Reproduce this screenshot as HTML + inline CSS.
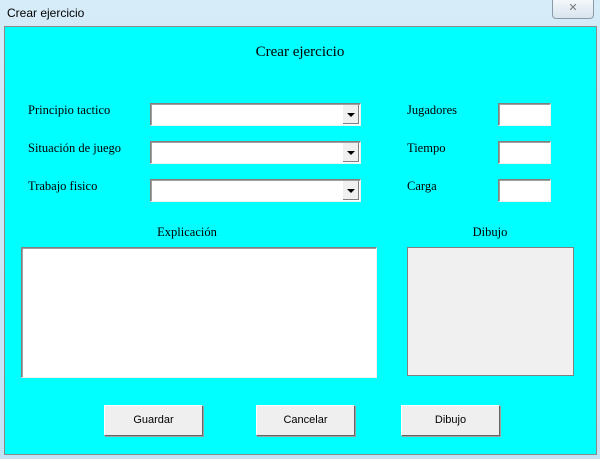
<!DOCTYPE html>
<html><head><meta charset="utf-8"><style>
*{margin:0;padding:0;box-sizing:border-box}
body{width:600px;height:459px;overflow:hidden;background:linear-gradient(#d6ecf8,#c4e4f5);position:relative;font-family:"Liberation Serif",serif}
.a{position:absolute}
.title{left:7px;top:6px;font:12px "Liberation Sans",sans-serif;color:#000}
.close{left:552px;top:0;width:42px;height:19px;border:1px solid #8a9aa8;border-top:none;border-radius:0 0 4px 4px;background:linear-gradient(#f4f8fb,#d8e4ee);text-align:center;font:11px "Liberation Sans",sans-serif;color:#777;line-height:17px}
.main{left:4px;top:26px;width:593px;height:429px;background:#00ffff;border:1px solid #8a8a8a}
.lbl{font-size:12.5px;color:#000}
.combo{width:211px;height:23px;background:#fff;border:1px solid;border-color:#808080 #f0f0f0 #f0f0f0 #808080;box-shadow:inset 1px 1px 0 #a0a0a0}
.combo i{position:absolute;right:1px;top:1px;width:16px;height:19px;background:#f0f0f0;border-right:1px solid #808080;border-bottom:1px solid #808080}
.combo i:after{content:"";position:absolute;left:4px;top:8px;border-left:4px solid transparent;border-right:4px solid transparent;border-top:4px solid #000}
.tb{width:53px;height:23px;background:#fff;border:1px solid;border-color:#808080 #f0f0f0 #f0f0f0 #808080;box-shadow:inset 1px 1px 0 #a0a0a0}
.btn{width:99px;height:31px;background:#efefef;border:1px solid;border-color:#fff #646464 #646464 #fff;box-shadow:1px 1px 0 #a0a0a0;font:11px "Liberation Sans",sans-serif;text-align:center;line-height:29px}
</style></head><body>
<div class="a title">Crear ejercicio</div>
<div class="a close">✕</div>
<div class="a main"></div>
<div class="a" style="left:0;width:600px;top:44px;text-align:center;font-size:15px">Crear ejercicio</div>
<div class="a lbl" style="left:28px;top:103px">Principio tactico</div>
<div class="a lbl" style="left:28px;top:141px">Situación de juego</div>
<div class="a lbl" style="left:28px;top:179px">Trabajo fisico</div>
<div class="a combo" style="left:150px;top:103px"><i></i></div>
<div class="a combo" style="left:150px;top:141px"><i></i></div>
<div class="a combo" style="left:150px;top:179px"><i></i></div>
<div class="a lbl" style="left:407px;top:103px">Jugadores</div>
<div class="a lbl" style="left:407px;top:141px">Tiempo</div>
<div class="a lbl" style="left:407px;top:179px">Carga</div>
<div class="a tb" style="left:498px;top:103px"></div>
<div class="a tb" style="left:498px;top:141px"></div>
<div class="a tb" style="left:498px;top:179px"></div>
<div class="a lbl" style="left:137px;width:100px;text-align:center;top:225px">Explicación</div>
<div class="a lbl" style="left:440px;width:100px;text-align:center;top:225px">Dibujo</div>
<div class="a" style="left:21px;top:247px;width:356px;height:131px;background:#fff;border:1px solid;border-color:#808080 #f0f0f0 #f0f0f0 #808080;box-shadow:inset 1px 1px 0 #a0a0a0"></div>
<div class="a" style="left:407px;top:247px;width:167px;height:129px;background:#f0f0f0;border:1px solid #808080"></div>
<div class="a btn" style="left:104px;top:405px">Guardar</div>
<div class="a btn" style="left:256px;top:405px">Cancelar</div>
<div class="a btn" style="left:401px;top:405px">Dibujo</div>
</body></html>
